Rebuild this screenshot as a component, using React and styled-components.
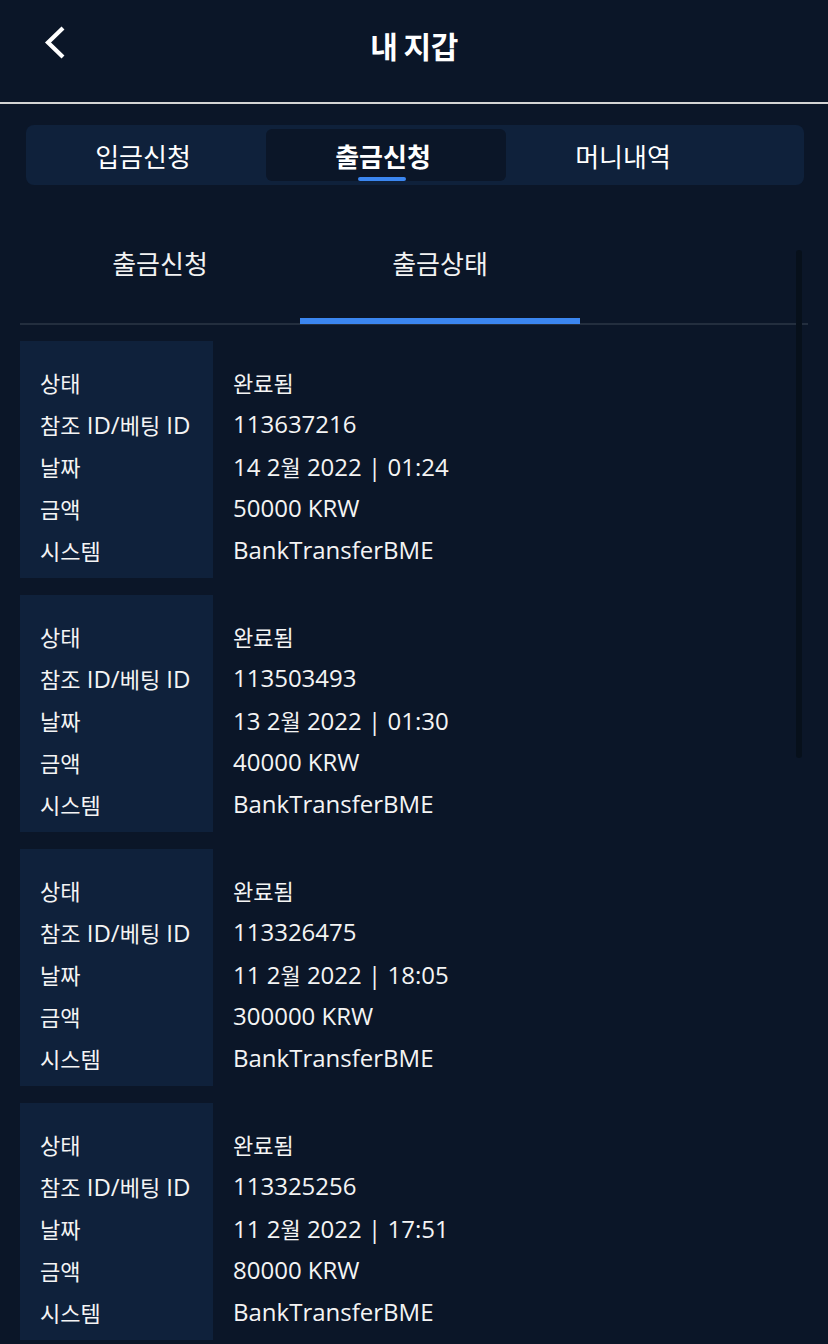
import React, { useState } from "react";
import styled, { createGlobalStyle } from "styled-components";

const records = [
  { status: "완료됨", ref: "113637216", date: "14 2월 2022 | 01:24", amount: "50000 KRW", system: "BankTransferBME" },
  { status: "완료됨", ref: "113503493", date: "13 2월 2022 | 01:30", amount: "40000 KRW", system: "BankTransferBME" },
  { status: "완료됨", ref: "113326475", date: "11 2월 2022 | 18:05", amount: "300000 KRW", system: "BankTransferBME" },
  { status: "완료됨", ref: "113325256", date: "11 2월 2022 | 17:51", amount: "80000 KRW", system: "BankTransferBME" },
];

const labels = [
  ["상태", "status"],
  ["참조 ID/베팅 ID", "ref"],
  ["날짜", "date"],
  ["금액", "amount"],
  ["시스템", "system"],
];

// hangul runs get the CJK face at a smaller size, latin stays in Open Sans
const Mixed = ({ text }) =>
  text
    .split(/([\uAC00-\uD7A3]+)/)
    .filter(Boolean)
    .map((part, i) =>
      /[\uAC00-\uD7A3]/.test(part) ? <Ko key={i}>{part}</Ko> : <span key={i}>{part}</span>
    );

const WalletPage = () => {
  const [tab, setTab] = useState(1);
  const [subTab, setSubTab] = useState(1);
  const tabs = ["입금신청", "출금신청", "머니내역"];

  return (
    <Page>
      <GlobalStyle />
      <Header>
        <BackButton aria-label="back">
          <svg width="24" height="36" viewBox="0 0 24 36">
            <path d="M19 3 L4 17.5 L19 32" fill="none" stroke="#fff" strokeWidth="4.2" />
          </svg>
        </BackButton>
        <Title>내 지갑</Title>
      </Header>

      <TabBar>
        {tabs.map((t, i) => (
          <Tab key={t} active={tab === i} onClick={() => setTab(i)}>
            {t}
          </Tab>
        ))}
      </TabBar>

      <SubTabs>
        {["출금신청", "출금상태"].map((t, i) => (
          <SubTab key={t} active={subTab === i} onClick={() => setSubTab(i)}>
            {t}
          </SubTab>
        ))}
      </SubTabs>

      <List>
        {records.map((r) => (
          <Card key={r.ref}>
            <LabelCol>
              {labels.map(([l]) => (
                <Cell key={l}>
                  <Mixed text={l} />
                </Cell>
              ))}
            </LabelCol>
            <ValueCol>
              {labels.map(([l, k]) => (
                <Cell key={l}>
                  <Mixed text={r[k]} />
                </Cell>
              ))}
            </ValueCol>
          </Card>
        ))}
      </List>

      <ScrollThumb />
    </Page>
  );
};

const GlobalStyle = createGlobalStyle`
  html, body {
    margin: 0;
    background: #0b1628;
  }
  body {
    font-family: "Open Sans", "Noto Sans CJK KR", sans-serif;
    color: #ffffff;
  }
  * {
    box-sizing: border-box;
  }
`;

const Page = styled.div`
  position: relative;
  width: 828px;
  min-height: 1344px;
  background: #0b1628;
  overflow: hidden;
`;

const Header = styled.header`
  position: relative;
  height: 104px;
  display: flex;
  align-items: center;
  justify-content: center;
  padding-bottom: 12px;
  border-bottom: 2px solid #d4d4d4;
`;

const BackButton = styled.button`
  position: absolute;
  left: 44px;
  top: 25px;
  background: none;
  border: none;
  padding: 0;
  display: flex;
  cursor: pointer;
`;

const Title = styled.h1`
  margin: 0;
  font-family: "Noto Sans CJK KR", sans-serif;
  font-size: 30px;
  font-weight: 700;
  letter-spacing: -0.5px;
`;

const TabBar = styled.nav`
  margin: 21px 24px 0 26px;
  height: 60px;
  padding: 4px 0;
  display: flex;
  background: #0f213b;
  border-radius: 8px;
`;

const Tab = styled.div`
  position: relative;
  width: 240px;
  display: flex;
  align-items: center;
  justify-content: center;
  padding-right: 6px;
  font-family: "Noto Sans CJK KR", sans-serif;
  font-size: 26px;
  font-weight: ${(p) => (p.active ? 700 : 400)};
  background: ${(p) => (p.active ? "#0b1628" : "transparent")};
  border-radius: 6px;
  cursor: pointer;

  &::after {
    content: "";
    display: ${(p) => (p.active ? "block" : "none")};
    position: absolute;
    bottom: 0;
    left: 92px;
    width: 48px;
    height: 4px;
    border-radius: 2px;
    background: #3b86f0;
  }
`;

const SubTabs = styled.div`
  margin: 40px 20px 0;
  display: flex;
  border-bottom: 2px solid #232e3e;
`;

const SubTab = styled.div`
  position: relative;
  width: 280px;
  height: 98px;
  padding-top: 19px;
  text-align: center;
  font-family: "Noto Sans CJK KR", sans-serif;
  font-size: 26px;
  color: #f2f2f2;
  cursor: pointer;

  &::after {
    content: "";
    display: ${(p) => (p.active ? "block" : "none")};
    position: absolute;
    left: 0;
    right: 0;
    bottom: -1px;
    height: 6px;
    background: #3b86f0;
  }
`;

const List = styled.div`
  margin: 16px 20px 0;
  display: flex;
  flex-direction: column;
  gap: 17px;
`;

const Card = styled.div`
  display: flex;
  height: 237px;
`;

const LabelCol = styled.div`
  width: 193px;
  padding: 20px 0 0 20px;
  background: #0f213b;
`;

const ValueCol = styled.div`
  flex: 1;
  padding: 20px 0 0 20px;
`;

const Cell = styled.div`
  height: 42px;
  line-height: 42px;
  font-size: 24px;
  color: #f4f4f4;
  white-space: nowrap;
`;

const Ko = styled.span`
  font-family: "Noto Sans CJK KR", sans-serif;
  font-size: 22px;
`;

const ScrollThumb = styled.div`
  position: absolute;
  left: 796px;
  top: 250px;
  width: 6px;
  height: 508px;
  border-radius: 3px;
  background: #07101b;
`;

export default WalletPage;
